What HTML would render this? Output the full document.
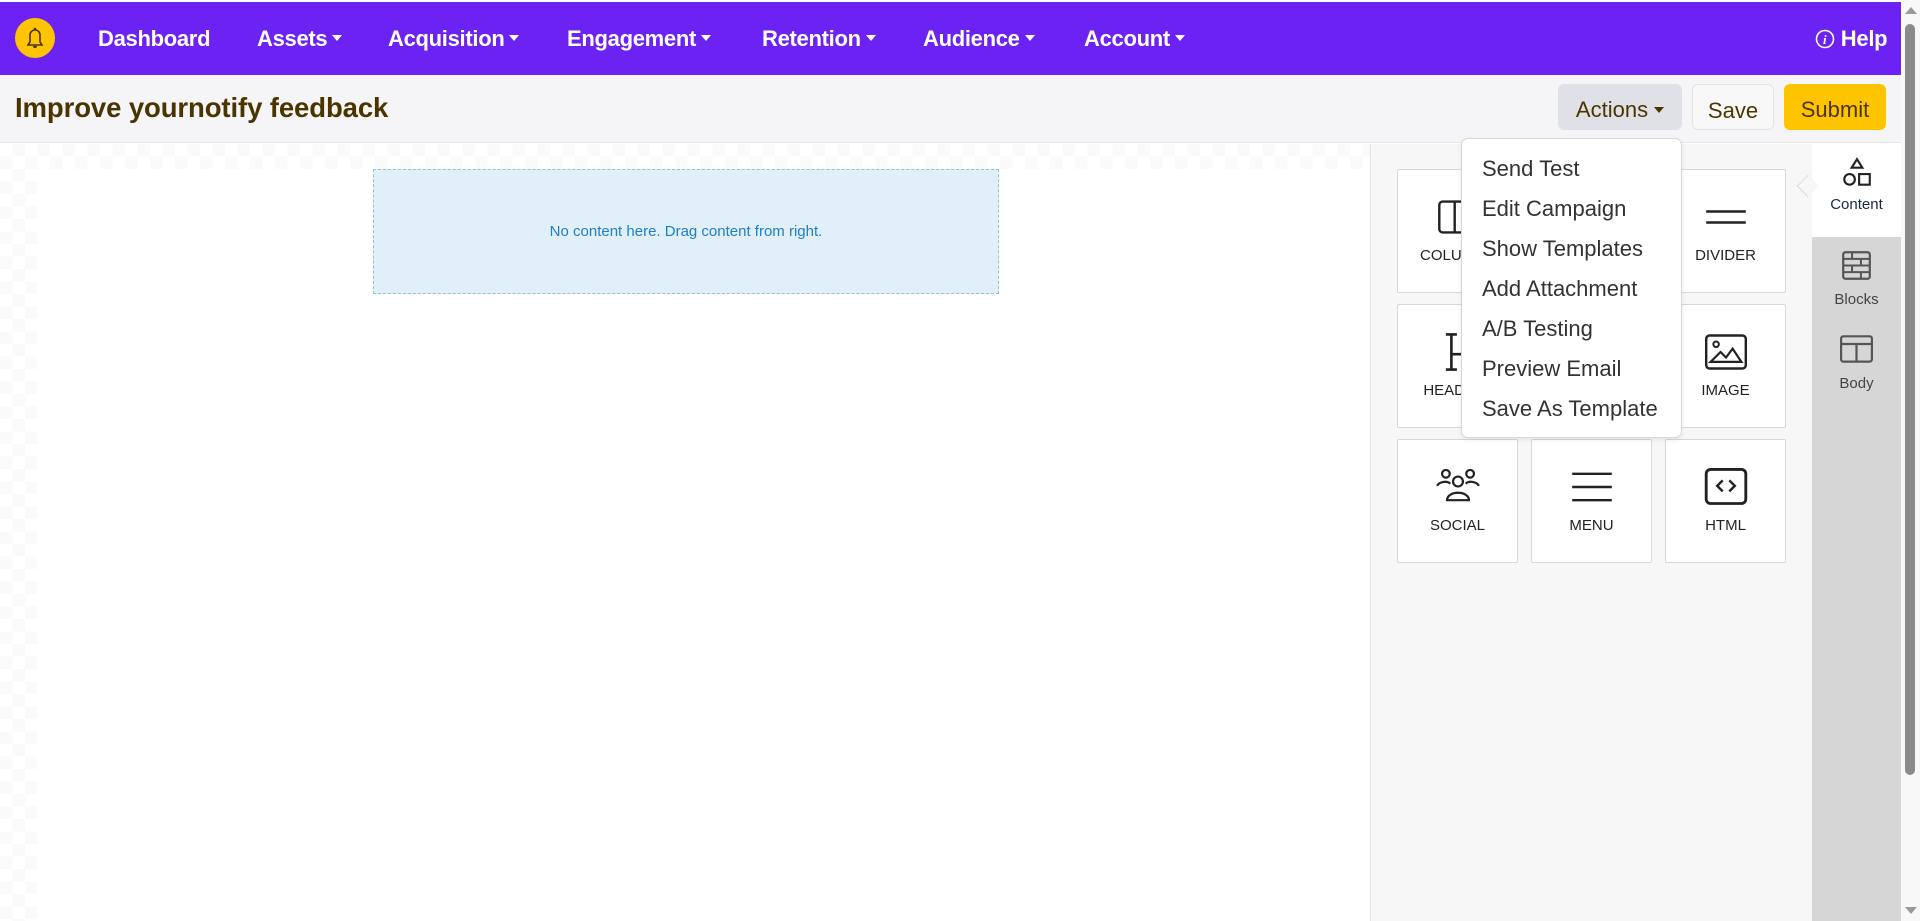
<!DOCTYPE html>
<html><head><meta charset="utf-8"><style>
*{box-sizing:border-box;margin:0;padding:0}
body{width:1920px;height:921px;overflow:hidden;background:#fff;font-family:"Liberation Sans",sans-serif;position:relative}
.nav{position:absolute;left:0;top:2px;width:1901px;height:73px;background:#6c22f2}
.logo{position:absolute;left:15px;top:16px;width:40px;height:40px;border-radius:50%;background:#ffc400}
.ni{position:absolute;top:24px;color:#fff;font-weight:bold;font-size:22px;letter-spacing:-0.3px}
.ni .c{display:inline-block;width:0;height:0;border-left:5px solid transparent;border-right:5px solid transparent;border-top:6px solid #fff;margin-left:5px;vertical-align:5px}
.sub{position:absolute;left:0;top:75px;width:1901px;height:68px;background:#f5f5f7;border-bottom:1px solid #e6e6e8}
.title{position:absolute;left:15px;top:92px;font-size:27.5px;font-weight:bold;color:#4a3500;letter-spacing:-0.1px}
.btn{position:absolute;top:84px;height:46px;border-radius:6px;font-size:22px;color:#4a3500;text-align:center;line-height:46px;padding-top:3px}
.canvas{position:absolute;left:0;top:144px;width:1370px;height:777px;
background-image:linear-gradient(45deg,#fafafa 25%,transparent 25%,transparent 75%,#fafafa 75%),linear-gradient(45deg,#fafafa 25%,transparent 25%,transparent 75%,#fafafa 75%);
background-size:25px 25px;background-position:0 0,12.5px 12.5px}
.inner{position:absolute;left:37px;top:25px;width:1333px;height:752px;background:#fff}
.drop{position:absolute;left:373px;top:169px;width:626px;height:125px;background:#e0eff8;border:1px dashed #8fc4e0;color:#1e7fc7;font-size:15px;text-align:center;line-height:123px}
.panel{position:absolute;left:1370px;top:144px;width:442px;height:777px;background:#f7f7f7;border-left:1px solid #e2e2e2}
.tile{position:absolute;width:121px;height:124px;background:#fff;border:1px solid #d8d8d8;border-radius:2px;text-align:center}
.tile svg{position:absolute;left:38px;top:25px}
.tile span{position:absolute;left:0;right:0;top:77px;font-size:15px;color:#222}
.tabs{position:absolute;left:1812px;top:144px;width:89px;height:777px;background:#d6d6d6}
.tab{position:absolute;left:0;width:89px;text-align:center;font-size:15px;color:#444}
.sb{position:absolute;left:1901px;top:0;width:19px;height:921px;background:#f8f8f8}
.menu{position:absolute;left:1461px;top:138px;width:221px;height:300px;background:#fff;border:1px solid #d8d8d8;border-radius:7px;box-shadow:0 2px 6px rgba(0,0,0,.08)}
.menu div{position:absolute;left:20px;font-size:22px;color:#333;white-space:nowrap}
</style></head><body>
<div class="nav">
<div class="logo"><svg width="40" height="40" viewBox="0 0 40 40"><path d="M13 27h14l-2-3v-7a5 5 0 0 0-10 0v7z" fill="none" stroke="#4a3500" stroke-width="1.6"/><circle cx="20" cy="11" r="1.3" fill="#4a3500"/><path d="M18 28a2 2 0 0 0 4 0" fill="#4a3500"/></svg></div>
<div class="ni" style="left:98px">Dashboard</div>
<div class="ni" style="left:257px">Assets<span class="c"></span></div>
<div class="ni" style="left:388px">Acquisition<span class="c"></span></div>
<div class="ni" style="left:567px">Engagement<span class="c"></span></div>
<div class="ni" style="left:762px">Retention<span class="c"></span></div>
<div class="ni" style="left:923px">Audience<span class="c"></span></div>
<div class="ni" style="left:1084px">Account<span class="c"></span></div>
<div class="ni" style="left:1815px"><svg width="20" height="20" viewBox="0 0 20 20" style="vertical-align:-3px"><circle cx="10" cy="10" r="8.5" fill="none" stroke="#fff" stroke-width="1.6"/><text x="8" y="15" font-size="13" font-style="italic" font-weight="bold" fill="#fff" font-family="Liberation Serif">i</text></svg> Help</div>
</div>
<div class="sub"></div>
<div class="title">Improve yournotify feedback</div>
<div class="btn" style="left:1558px;width:124px;background:#dfe1e6">Actions<span style="display:inline-block;border-left:5px solid transparent;border-right:5px solid transparent;border-top:6px solid #4a3500;margin-left:6px;vertical-align:4px"></span></div>
<div class="btn" style="left:1692px;width:82px;background:#f8f8f8;border:1px solid #e3e3e3">Save</div>
<div class="btn" style="left:1784px;width:102px;background:#ffc400">Submit</div>
<div class="canvas"><div class="inner"></div></div>
<div class="drop">No content here. Drag content from right.</div>
<div class="panel"></div>
<div class="tile" style="left:1397px;top:169px"><svg width="44" height="44" viewBox="0 0 40 40"><rect x="3" y="6" width="34" height="28" rx="3" fill="none" stroke="#222" stroke-width="2.2"/><line x1="17" y1="6" x2="17" y2="34" stroke="#222" stroke-width="2.2"/></svg><span>COLUMNS</span></div>
<div class="tile" style="left:1531px;top:169px"></div>
<div class="tile" style="left:1665px;top:169px"><svg width="44" height="44" viewBox="0 0 40 40"><line x1="2" y1="15" x2="38" y2="15" stroke="#222" stroke-width="2.2"/><line x1="2" y1="25" x2="38" y2="25" stroke="#222" stroke-width="2.2"/></svg><span>DIVIDER</span></div>
<div class="tile" style="left:1397px;top:304px"><svg width="44" height="44" viewBox="0 0 40 40"><path d="M14 4v32M9 4h10M9 36h10M14 22h24" stroke="#222" stroke-width="2.4" fill="none"/></svg><span>HEADING</span></div>
<div class="tile" style="left:1531px;top:304px"></div>
<div class="tile" style="left:1665px;top:304px"><svg width="44" height="44" viewBox="0 0 40 40"><rect x="2" y="5" width="36" height="30" rx="3" fill="none" stroke="#222" stroke-width="2.2"/><circle cx="11" cy="13" r="2.5" fill="none" stroke="#222" stroke-width="1.8"/><path d="M6 29l9-9 5 5 6-8 8 12z" fill="none" stroke="#222" stroke-width="2"/></svg><span>IMAGE</span></div>
<div class="tile" style="left:1397px;top:439px"><svg width="44" height="44" viewBox="0 0 40 40"><circle cx="9" cy="8" r="3.5" fill="none" stroke="#222" stroke-width="2"/><circle cx="31" cy="8" r="3.5" fill="none" stroke="#222" stroke-width="2"/><circle cx="20" cy="15" r="4.5" fill="none" stroke="#222" stroke-width="2"/><path d="M1 19c2-4 9-5 12-2M39 19c-2-4-9-5-12-2M10 32c0-9 20-9 20 0z" fill="none" stroke="#222" stroke-width="2"/></svg><span>SOCIAL</span></div>
<div class="tile" style="left:1531px;top:439px"><svg width="44" height="44" viewBox="0 0 40 40"><path d="M2 8h36M2 20h36M2 32h36" stroke="#222" stroke-width="2.2"/></svg><span>MENU</span></div>
<div class="tile" style="left:1665px;top:439px"><svg width="44" height="44" viewBox="0 0 40 40"><rect x="2" y="4" width="36" height="31" rx="4" fill="none" stroke="#222" stroke-width="2.6"/><path d="M17 14l-5 5 5 5M23 14l5 5-5 5" fill="none" stroke="#222" stroke-width="2.2"/></svg><span>HTML</span></div>
<div class="tabs">
<div class="tab" style="top:0;height:93px;background:#fff;padding-top:13px"><svg width="34" height="32" viewBox="0 0 32 30"><path d="M16 2l5 8h-10z" fill="none" stroke="#222" stroke-width="2"/><circle cx="9" cy="21" r="5" fill="none" stroke="#222" stroke-width="2"/><rect x="18" y="16" width="10" height="10" fill="none" stroke="#222" stroke-width="2"/></svg><div style="color:#1a2a40;margin-top:3px">Content</div></div>
<div class="tab" style="top:106px"><svg width="31" height="31" viewBox="0 0 28 28"><rect x="2" y="2" width="24" height="24" rx="2" fill="none" stroke="#555" stroke-width="2"/><path d="M2 8h24M2 14h24M2 20h24M10 2v6M18 8v6M10 14v6M18 20v6" stroke="#555" stroke-width="1.8"/></svg><div style="margin-top:6px">Blocks</div></div>
<div class="tab" style="top:190px"><svg width="33" height="31" viewBox="0 0 30 28"><rect x="1" y="2" width="28" height="23" rx="2" fill="none" stroke="#555" stroke-width="2"/><path d="M1 9h28M15 9v16" stroke="#555" stroke-width="2"/></svg><div style="margin-top:6px">Body</div></div>
</div>
<div style="position:absolute;left:1800px;top:178px;width:16px;height:16px;background:#f7f7f7;border-left:1px solid #ddd;border-bottom:1px solid #ddd;transform:rotate(45deg)"></div>
<div class="menu">
<div style="top:17px">Send Test</div>
<div style="top:57px">Edit Campaign</div>
<div style="top:97px">Show Templates</div>
<div style="top:137px">Add Attachment</div>
<div style="top:177px">A/B Testing</div>
<div style="top:217px">Preview Email</div>
<div style="top:257px">Save As Template</div>
</div>
<div class="sb"><div style="position:absolute;left:4px;top:7px;border-left:6px solid transparent;border-right:6px solid transparent;border-bottom:7px solid #999"></div><div style="position:absolute;left:4px;top:24px;width:10px;height:751px;background:#8a8a8a;border-radius:5px"></div><div style="position:absolute;left:4px;top:907px;border-left:6px solid transparent;border-right:6px solid transparent;border-top:7px solid #999"></div></div>
</body></html>
